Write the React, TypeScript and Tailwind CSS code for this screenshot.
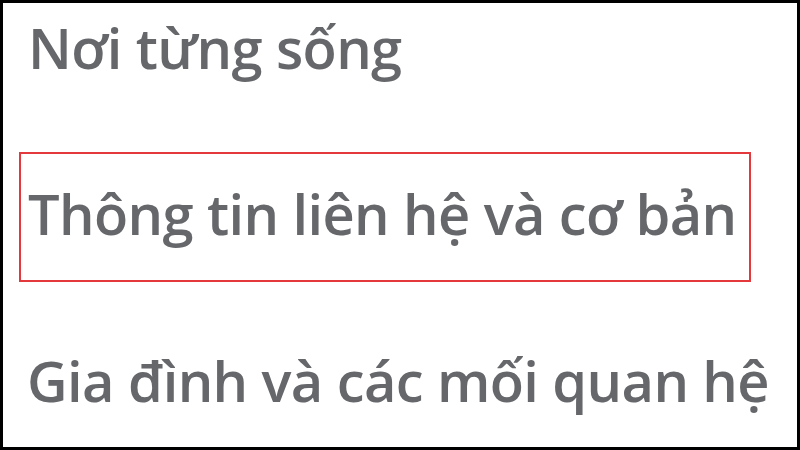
import React from "react";

const items = ["Nơi từng sống", "Thông tin liên hệ và cơ bản", "Gia đình và các mối quan hệ"];

export default function App() {
  return (
    <div className="w-[800px] h-[450px] bg-white border-[3px] border-black box-border overflow-hidden" style={{ fontFamily: '"Open Sans", "Noto Sans", sans-serif' }}>
      <div className="flex flex-col text-[#65676b] font-semibold text-[56px] leading-none tracking-[-0.6px] whitespace-nowrap">
        <div className="mt-[16px] pl-[25px]">{items[0]}</div>
        <div className="mt-[77px] ml-[16px] w-[732px] h-[130px] border-[2.5px] border-[#e4393c] pt-[31px] pl-[7px] box-border">
          {items[1]}
        </div>
        <div className="mt-[70px] pl-[24px]">{items[2]}</div>
      </div>
    </div>
  );
}
